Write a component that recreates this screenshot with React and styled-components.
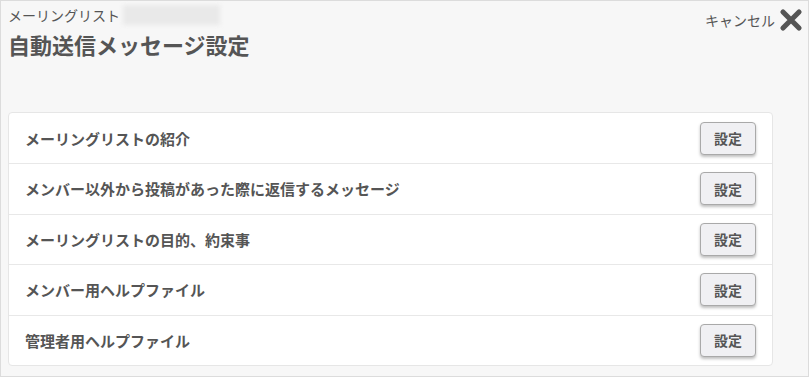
import React from "react";
import styled, { createGlobalStyle } from "styled-components";

const GlobalStyle = createGlobalStyle`
  html, body {
    margin: 0;
    padding: 0;
    background: #fff;
  }
  body {
    font-family: "Noto Sans CJK JP", "Noto Sans", sans-serif;
    color: #555;
  }
`;

const items = [
  "メーリングリストの紹介",
  "メンバー以外から投稿があった際に返信するメッセージ",
  "メーリングリストの目的、約束事",
  "メンバー用ヘルプファイル",
  "管理者用ヘルプファイル",
];

const App = () => {
  return (
    <>
      <GlobalStyle />
      <Frame>
        <Header>
          <div>
            <ListName>
              メーリングリスト<Redacted />
            </ListName>
            <Title>自動送信メッセージ設定</Title>
          </div>
          <Cancel>
            キャンセル
            <CloseIcon viewBox="0 0 24 24">
              <path
                d="M4 4 L20 20 M20 4 L4 20"
                stroke="#555"
                strokeWidth="5.2"
                strokeLinecap="round"
              />
            </CloseIcon>
          </Cancel>
        </Header>
        <Panel>
          {items.map((label) => (
            <Row key={label}>
              <Label>{label}</Label>
              <SetButton>設定</SetButton>
            </Row>
          ))}
        </Panel>
      </Frame>
    </>
  );
};

export default App;

const Frame = styled.div`
  box-sizing: border-box;
  width: 809px;
  height: 377px;
  background: #f7f7f7;
  border: 1px solid #dcdcdc;
  padding: 0 35px 0 7px;
`;

const Header = styled.div`
  display: flex;
  justify-content: space-between;
  align-items: flex-start;
  height: 111px;
  margin-right: -30px;
`;

const ListName = styled.div`
  display: flex;
  align-items: center;
  font-size: 14px;
  line-height: 20px;
  margin-top: 4px;
  color: #555;
`;

const Redacted = styled.span`
  display: inline-block;
  width: 97px;
  height: 20px;
  margin-left: 3px;
  background: #e9e9e9;
  filter: blur(2px);
`;

const Title = styled.h1`
  margin: 4px 0 0;
  font-size: 22px;
  line-height: 30px;
  font-weight: 700;
  color: #555;
`;

const Cancel = styled.div`
  display: flex;
  align-items: center;
  gap: 4px;
  font-size: 14px;
  color: #555;
  margin-top: 7px;
`;

const CloseIcon = styled.svg`
  width: 24px;
  height: 24px;
`;

const Panel = styled.div`
  background: #fff;
  border: 1px solid #e6e6e6;
  border-radius: 4px;
  overflow: hidden;
`;

const Row = styled.div`
  box-sizing: border-box;
  display: flex;
  align-items: center;
  justify-content: space-between;
  height: 50px;
  padding: 0 16px;
  & + & {
    border-top: 1px solid #e8e8e8;
    height: 50.5px;
  }
`;

const Label = styled.span`
  font-size: 15px;
  font-weight: 700;
  color: #555;
`;

const SetButton = styled.button`
  width: 56px;
  height: 33px;
  font-family: "Noto Sans CJK JP", sans-serif;
  font-size: 14px;
  font-weight: 700;
  color: #555;
  background: #f0f0f3;
  border: 1px solid #a9a9a9;
  border-radius: 4px;
  box-shadow: 0 2px 3px rgba(0, 0, 0, 0.25);
  cursor: pointer;
`;
